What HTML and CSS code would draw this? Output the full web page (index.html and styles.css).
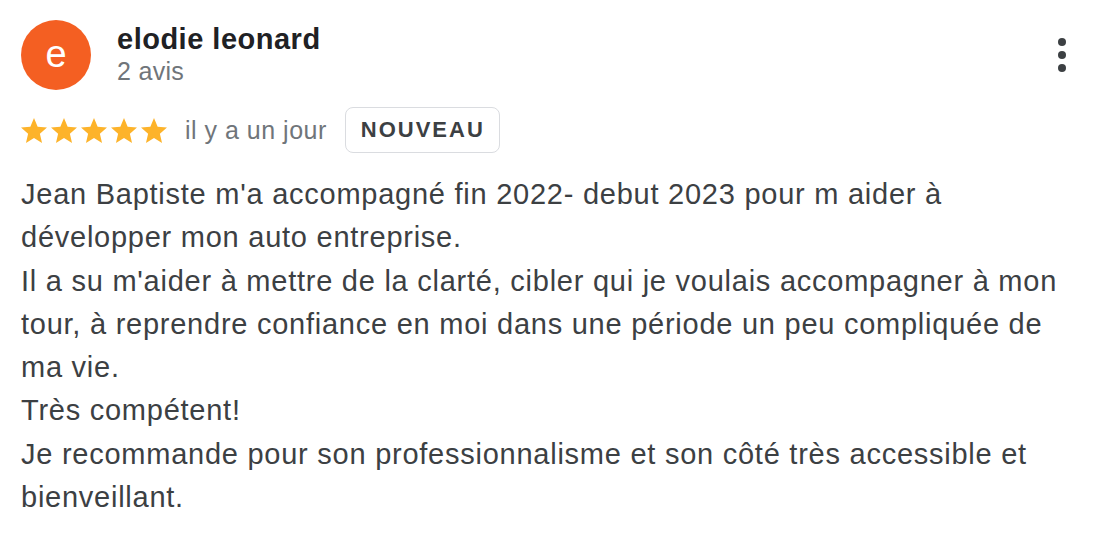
FILE: index.html
```html
<!DOCTYPE html>
<html lang="fr">
<head>
    <meta charset="UTF-8">
    <meta name="viewport" content="width=device-width, initial-scale=1.0">
    <title>Avis</title>
    <link rel="stylesheet" href="styles.css">
</head>
<body>
    <div class="review">
        <div class="review-header">
            <div class="avatar">e</div>
            <div class="author">
                <div class="author-name">elodie leonard</div>
                <div class="author-count">2 avis</div>
            </div>
            <div class="menu">
                <span class="dot"></span>
                <span class="dot"></span>
                <span class="dot"></span>
            </div>
        </div>

        <div class="rating-row">
            <div class="stars">
                <svg class="star" viewBox="2 2 20 19" preserveAspectRatio="none"><path d="M12 17.27L18.18 21l-1.64-7.03L22 9.24l-7.19-.61L12 2 9.19 8.63 2 9.24l5.46 4.73L5.82 21z"/></svg>
                <svg class="star" viewBox="2 2 20 19" preserveAspectRatio="none"><path d="M12 17.27L18.18 21l-1.64-7.03L22 9.24l-7.19-.61L12 2 9.19 8.63 2 9.24l5.46 4.73L5.82 21z"/></svg>
                <svg class="star" viewBox="2 2 20 19" preserveAspectRatio="none"><path d="M12 17.27L18.18 21l-1.64-7.03L22 9.24l-7.19-.61L12 2 9.19 8.63 2 9.24l5.46 4.73L5.82 21z"/></svg>
                <svg class="star" viewBox="2 2 20 19" preserveAspectRatio="none"><path d="M12 17.27L18.18 21l-1.64-7.03L22 9.24l-7.19-.61L12 2 9.19 8.63 2 9.24l5.46 4.73L5.82 21z"/></svg>
                <svg class="star" viewBox="2 2 20 19" preserveAspectRatio="none"><path d="M12 17.27L18.18 21l-1.64-7.03L22 9.24l-7.19-.61L12 2 9.19 8.63 2 9.24l5.46 4.73L5.82 21z"/></svg>
            </div>
            <span class="review-date">il y a un jour</span>
            <span class="badge">NOUVEAU</span>
        </div>

        <p class="review-text">Jean Baptiste m'a accompagné fin 2022- debut 2023 pour m aider à développer mon auto entreprise.<br>Il a su m'aider à mettre de la clarté, cibler qui je voulais accompagner à mon tour, à reprendre confiance en moi dans une période un peu compliquée de ma vie.<br>Très compétent!<br>Je recommande pour son professionnalisme et son côté très accessible et bienveillant.</p>
    </div>
</body>
</html>
```

FILE: styles.css
```css
body {
    margin: 0;
    background-color: #fff;
    font-family: "Liberation Sans", Arial, sans-serif;
}

.review {
    padding: 20px 39px 0 21px;
}

.review-header {
    display: flex;
    align-items: flex-start;
}

.avatar {
    width: 70px;
    height: 70px;
    border-radius: 50%;
    background-color: #f45f22;
    color: #fff;
    font-size: 38px;
    line-height: 68px;
    text-align: center;
    flex-shrink: 0;
}

.author {
    flex: 1;
    margin-left: 26px;
    padding-top: 2px;
}

.author-name {
    font-size: 29px;
    line-height: 34px;
    font-weight: bold;
    color: #202124;
    letter-spacing: 0.5px;
}

.author-count {
    font-size: 25px;
    line-height: 31px;
    color: #70757a;
    letter-spacing: 0.3px;
}

.menu {
    display: flex;
    flex-direction: column;
    gap: 5px;
    margin-top: 18px;
    margin-right: 4px;
}

.dot {
    width: 8px;
    height: 8px;
    border-radius: 50%;
    background-color: #3c4043;
}

.rating-row {
    display: flex;
    align-items: center;
    margin-top: 17px;
}

.stars {
    display: flex;
    gap: 4px;
}

.star {
    width: 26px;
    height: 25px;
    fill: #fdb32a;
}

.review-date {
    margin-left: 18px;
    font-size: 25px;
    line-height: 30px;
    color: #70757a;
    letter-spacing: 0.5px;
}

.badge {
    margin-left: 18px;
    height: 44px;
    padding: 0 14px 0 15px;
    border: 1.5px solid #dadce0;
    border-radius: 8px;
    display: flex;
    align-items: center;
    font-size: 22px;
    font-weight: bold;
    letter-spacing: 2px;
    color: #3c4043;
}

.review-text {
    margin: 20px 0 0;
    font-size: 29px;
    line-height: 43.3px;
    color: #3c4043;
    letter-spacing: 0.75px;
}
```
